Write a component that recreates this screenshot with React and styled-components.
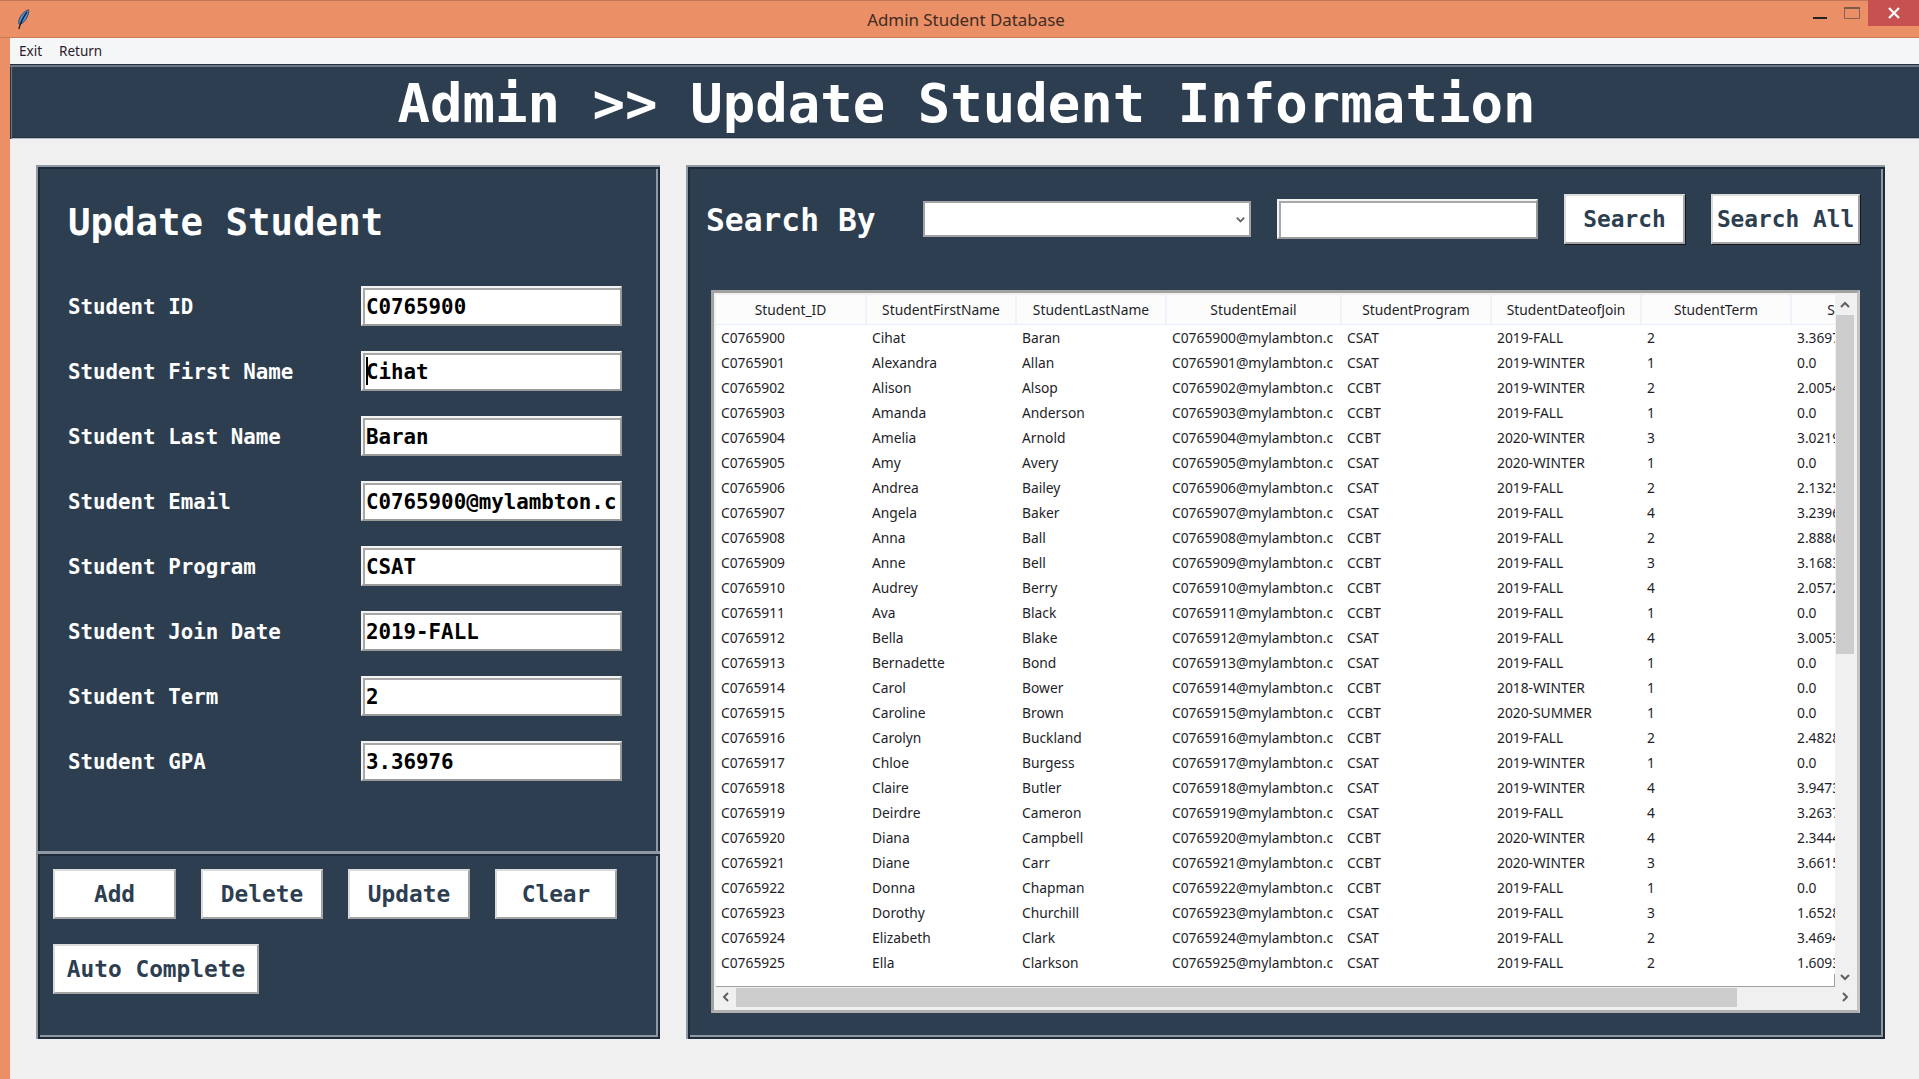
import styled, { createGlobalStyle } from "styled-components";

const NAVY = "#2c3e50";
const MONO = '"DejaVu Sans Mono", "Liberation Mono", monospace';
const UI = '"Noto Sans", "Open Sans", sans-serif';

const fields = [
  ["Student ID", "C0765900"],
  ["Student First Name", "Cihat"],
  ["Student Last Name", "Baran"],
  ["Student Email", "C0765900@mylambton.c"],
  ["Student Program", "CSAT"],
  ["Student Join Date", "2019-FALL"],
  ["Student Term", "2"],
  ["Student GPA", "3.36976"],
];

const columns = [
  "Student_ID",
  "StudentFirstName",
  "StudentLastName",
  "StudentEmail",
  "StudentProgram",
  "StudentDateofJoin",
  "StudentTerm",
  "StudentGPA",
];

const students = [
  ["Cihat", "Baran", "CSAT", "2019-FALL", 2, "3.36976"],
  ["Alexandra", "Allan", "CSAT", "2019-WINTER", 1, "0.0"],
  ["Alison", "Alsop", "CCBT", "2019-WINTER", 2, "2.00541"],
  ["Amanda", "Anderson", "CCBT", "2019-FALL", 1, "0.0"],
  ["Amelia", "Arnold", "CCBT", "2020-WINTER", 3, "3.02191"],
  ["Amy", "Avery", "CSAT", "2020-WINTER", 1, "0.0"],
  ["Andrea", "Bailey", "CSAT", "2019-FALL", 2, "2.13251"],
  ["Angela", "Baker", "CSAT", "2019-FALL", 4, "3.23961"],
  ["Anna", "Ball", "CCBT", "2019-FALL", 2, "2.88861"],
  ["Anne", "Bell", "CCBT", "2019-FALL", 3, "3.16831"],
  ["Audrey", "Berry", "CCBT", "2019-FALL", 4, "2.05721"],
  ["Ava", "Black", "CCBT", "2019-FALL", 1, "0.0"],
  ["Bella", "Blake", "CSAT", "2019-FALL", 4, "3.00531"],
  ["Bernadette", "Bond", "CSAT", "2019-FALL", 1, "0.0"],
  ["Carol", "Bower", "CCBT", "2018-WINTER", 1, "0.0"],
  ["Caroline", "Brown", "CCBT", "2020-SUMMER", 1, "0.0"],
  ["Carolyn", "Buckland", "CCBT", "2019-FALL", 2, "2.48281"],
  ["Chloe", "Burgess", "CSAT", "2019-WINTER", 1, "0.0"],
  ["Claire", "Butler", "CSAT", "2019-WINTER", 4, "3.94731"],
  ["Deirdre", "Cameron", "CSAT", "2019-FALL", 4, "3.26371"],
  ["Diana", "Campbell", "CCBT", "2020-WINTER", 4, "2.34441"],
  ["Diane", "Carr", "CCBT", "2020-WINTER", 3, "3.66151"],
  ["Donna", "Chapman", "CCBT", "2019-FALL", 1, "0.0"],
  ["Dorothy", "Churchill", "CSAT", "2019-FALL", 3, "1.65281"],
  ["Elizabeth", "Clark", "CSAT", "2019-FALL", 2, "3.46941"],
  ["Ella", "Clarkson", "CSAT", "2019-FALL", 2, "1.60931"],
];

const GlobalStyle = createGlobalStyle`
  html, body {
    margin: 0;
    padding: 0;
    background: #f0f0f0;
  }
  * {
    box-sizing: border-box;
  }
`;

const Window = styled.div`
  width: 1919px;
  height: 1079px;
  overflow: hidden;
  display: flex;
  flex-direction: column;
  background: #ea8f66;
  font-family: ${UI};
`;

const TitleBar = styled.div`
  height: 38px;
  flex: none;
  display: grid;
  grid-template-columns: 1fr auto 1fr;
  padding-left: 13px;
  border-top: 1px solid #c2775a;
  border-bottom: 1px solid #cc7a58;
`;

const TitleIcon = styled.svg`
  width: 14px;
  height: 21px;
  margin: 8px 0 0 3px;
`;

const TitleText = styled.div`
  font-size: 16.9px;
  line-height: 38px;
  color: #3f2c22;
`;

const WindowControls = styled.div`
  display: flex;
  justify-content: flex-end;
  align-items: flex-start;
  margin-top: -1px;
`;

const WinButton = styled.div`
  width: ${({ $wide }) => ($wide ? "51px" : "32px")};
  height: 26px;
  display: flex;
  align-items: center;
  justify-content: center;
  background: ${({ $wide }) => ($wide ? "#c75050" : "transparent")};
`;

const WinGlyph = styled.svg`
  width: 16px;
  height: 26px;
  display: block;
`;

const Body = styled.div`
  flex: 1;
  margin-left: 10px;
  display: flex;
  flex-direction: column;
  background: #f0f0f0;
`;

const MenuBar = styled.div`
  height: 26px;
  flex: none;
  display: flex;
  align-items: center;
  gap: 17px;
  padding-left: 9px;
  background: #f5f6f8;
  font-size: 13.5px;
  color: #2a1c2c;
`;

const Banner = styled.header`
  height: 75px;
  flex: none;
  display: flex;
  align-items: center;
  justify-content: center;
  padding: 3px 0 0 4px;
  background: ${NAVY};
  color: #fff;
  font-family: ${MONO};
  font-weight: 700;
  font-size: 54px;
  white-space: pre;
  box-shadow: inset 0 1px #222f3c, inset 0 3px #6d7884, inset 1px 0 #222f3c,
    inset 2px 0 #6d7884, inset 0 -1px #b8bec4, inset 0 -2px #222f3c;
`;

const Main = styled.main`
  flex: 1;
  display: flex;
  align-items: flex-start;
  gap: 26px;
  padding: 26px 0 0 26px;
`;

const Panel = styled.section`
  height: 874px;
  flex: none;
  background: ${NAVY};
  color: #fff;
  font-family: ${MONO};
  box-shadow: inset 2px 2px #8e99a4, inset -2px -2px #1f2b38,
    inset 4px 4px #1f2b38, inset -4px -4px #8e99a4;
`;

const UpdatePanel = styled(Panel)`
  width: 624px;
  display: flex;
  flex-direction: column;
`;

const SearchPanel = styled(Panel)`
  width: 1199px;
  padding: 29px 25px 0 20px;
`;

const FormSection = styled.div`
  height: 686px;
  flex: none;
  padding: 35px 32px 0 32px;
`;

const PanelTitle = styled.h2`
  margin: 0 0 42px;
  font-size: 37.4px;
  line-height: 44px;
  font-weight: 700;
`;

const FieldList = styled.div`
  display: flex;
  flex-direction: column;
  gap: 25px;
`;

const FieldRow = styled.div`
  display: flex;
  align-items: center;
  height: 40px;
`;

const FieldLabel = styled.label`
  width: 293px;
  flex: none;
  padding-top: 2px;
  font-size: 20.8px;
  font-weight: 700;
`;

const Entry = styled.div`
  position: relative;
  width: ${({ $width }) => $width}px;
  height: 40px;
  flex: none;
  padding: 0 3px;
  overflow: hidden;
  background: #fff;
  color: #000;
  font-size: 20.8px;
  font-weight: 700;
  line-height: 38px;
  white-space: nowrap;
  border: 2px solid;
  border-color: #f4f4f4 #9a9a9a #9a9a9a #f4f4f4;
  box-shadow: inset 2px 2px #a8a8a8;
`;

const Caret = styled.span`
  position: absolute;
  left: 3px;
  top: 4px;
  width: 2px;
  height: 28px;
  background: #000;
`;

const ButtonSection = styled.div`
  flex: 1;
  display: flex;
  flex-direction: column;
  gap: 25px;
  padding: 15px 0 0 15px;
  border-top: 3px solid #8e99a4;
  box-shadow: inset 0 2px #1f2b38;
  margin: 0 0 4px 2px;
`;

const ButtonRow = styled.div`
  display: flex;
  gap: 25px;
`;

const ActionButton = styled.button`
  width: ${({ $width }) => $width}px;
  height: 50px;
  flex: none;
  padding: 0;
  background: #fff;
  color: ${NAVY};
  font-family: ${MONO};
  font-size: 22.8px;
  font-weight: 700;
  border: 2px solid;
  border-color: #dcdcdc #a4a4a4 #a4a4a4 #dcdcdc;
  border-radius: 0;
  box-shadow: ${({ $shadow }) => ($shadow ? "1px 1px #11181f" : "none")};
`;

const SearchBar = styled.div`
  display: flex;
  align-items: center;
  gap: 26px;
  height: 50px;
`;

const SearchLabel = styled.div`
  width: 191px;
  flex: none;
  padding-top: 2px;
  font-size: 31.3px;
  font-weight: 700;
`;

const Combo = styled.div`
  width: 328px;
  height: 36px;
  flex: none;
  display: flex;
  align-items: center;
  justify-content: flex-end;
  padding-right: 3px;
  background: #fff;
  border: 2px solid #a3a3a3;
`;

const Tree = styled.div`
  width: 1149px;
  height: 723px;
  margin: 46px 0 0 5px;
  padding: 2px;
  display: grid;
  grid-template-columns: 1119px 20px;
  grid-template-rows: 692px 20px;
  background: #f0f0f0;
  color: #1e1e28;
  font-family: ${UI};
  font-size: 13.8px;
  border: 3px solid;
  border-color: #a2a2a2 #c4c4c4 #b0b0b0 #a2a2a2;
`;

const Viewport = styled.div`
  position: relative;
  overflow: hidden;
  background: #fff;
  border-bottom: 1px solid #a0a0a0;

  &::after {
    content: "";
    position: absolute;
    right: 0;
    bottom: 0;
    width: 1px;
    height: 12px;
    background: #a0a0a0;
  }
`;

const TreeRow = styled.div`
  display: grid;
  grid-template-columns: 151px 150px 150px 175px 150px 150px 150px 150px;
  width: 1226px;
  height: ${({ $head }) => ($head ? "30px" : "25px")};
  align-items: center;
  ${({ $head }) => ($head ? "border-bottom: 1px solid #e8f0fa;" : "")}
`;

const HeadCell = styled.div`
  height: 100%;
  line-height: 29px;
  text-align: center;
  white-space: nowrap;
  overflow: hidden;
  background: #fcfcfc;
  border-right: 2px solid #eef3fa;
`;

const Cell = styled.div`
  padding-left: 5px;
  white-space: nowrap;
  overflow: hidden;
`;

const VScroll = styled.div`
  display: flex;
  flex-direction: column;
  background: #f0f0f0;
`;

const HScroll = styled.div`
  grid-column: 1 / 3;
  display: flex;
  background: #f0f0f0;
`;

const ArrowBox = styled.div`
  width: ${({ $w }) => $w}px;
  height: ${({ $h }) => $h}px;
  flex: none;
  display: flex;
  align-items: center;
  justify-content: center;
`;

const VThumb = styled.div`
  width: 18px;
  height: 339px;
  margin-left: 1px;
  flex: none;
  background: #cdcdcd;
`;

const HThumb = styled.div`
  width: 1001px;
  height: 19px;
  margin-top: 1px;
  flex: none;
  background: #cdcdcd;
`;

const Spacer = styled.div`
  flex: 1;
`;

function Chevron({ dir, color = "#5f5f5f", size = 12 }) {
  const paths = {
    up: "M2 8 L6 4 L10 8",
    down: "M2 4 L6 8 L10 4",
    left: "M8 2 L4 6 L8 10",
    right: "M4 2 L8 6 L4 10",
  };
  return (
    <svg width={size} height={size} viewBox="0 0 12 12">
      <path d={paths[dir]} fill="none" stroke={color} strokeWidth="2" />
    </svg>
  );
}

function Feather() {
  return (
    <TitleIcon viewBox="0 0 14 21">
      <path
        d="M12.6 0.8 C8.4 2 4.4 6.2 3 11 C2.4 13.2 2.6 14.6 3.4 15.4 C6.8 14.6 9.6 11.6 11.2 8 C12.4 5.4 13 3 12.6 0.8 Z"
        fill="#4f8fd8"
        stroke="#24364e"
        strokeWidth="0.8"
      />
      <path d="M11 3 C8 7 5 12 2.8 20" fill="none" stroke="#14202e" strokeWidth="1.3" />
    </TitleIcon>
  );
}

export default function App() {
  return (
    <>
      <GlobalStyle />
      <Window>
        <TitleBar>
          <div>
            <Feather />
          </div>
          <TitleText>Admin Student Database</TitleText>
          <WindowControls>
            <WinButton>
              <WinGlyph viewBox="0 0 16 26">
                <rect x="1" y="17" width="14" height="2" fill="#222" />
              </WinGlyph>
            </WinButton>
            <WinButton>
              <WinGlyph viewBox="0 0 16 26">
                <rect x="0.5" y="7.5" width="15" height="11" fill="none" stroke="#8a6350" />
                <rect x="0" y="7" width="16" height="2" fill="#7b5a4a" />
              </WinGlyph>
            </WinButton>
            <WinButton $wide>
              <WinGlyph viewBox="0 0 16 26">
                <path d="M3 8 L13 18 M13 8 L3 18" stroke="#fff" strokeWidth="2.2" />
              </WinGlyph>
            </WinButton>
          </WindowControls>
        </TitleBar>
        <Body>
          <MenuBar>
            <span>Exit</span>
            <span>Return</span>
          </MenuBar>
          <Banner>{"Admin >> Update Student Information"}</Banner>
          <Main>
            <UpdatePanel>
              <FormSection>
                <PanelTitle>Update Student</PanelTitle>
                <FieldList>
                  {fields.map(([label, value], i) => (
                    <FieldRow key={label}>
                      <FieldLabel>{label}</FieldLabel>
                      <Entry $width={261}>
                        {i === 1 && <Caret />}
                        {value}
                      </Entry>
                    </FieldRow>
                  ))}
                </FieldList>
              </FormSection>
              <ButtonSection>
                <ButtonRow>
                  <ActionButton $width={123}>Add</ActionButton>
                  <ActionButton $width={122}>Delete</ActionButton>
                  <ActionButton $width={122}>Update</ActionButton>
                  <ActionButton $width={122}>Clear</ActionButton>
                </ButtonRow>
                <ButtonRow>
                  <ActionButton $width={206}>Auto Complete</ActionButton>
                </ButtonRow>
              </ButtonSection>
            </UpdatePanel>
            <SearchPanel>
              <SearchBar>
                <SearchLabel>Search By</SearchLabel>
                <Combo>
                  <Chevron dir="down" size={11} color="#666" />
                </Combo>
                <Entry $width={261} />
                <ActionButton $width={121} $shadow>
                  Search
                </ActionButton>
                <ActionButton $width={149} $shadow>
                  Search All
                </ActionButton>
              </SearchBar>
              <Tree>
                <Viewport>
                  <TreeRow $head>
                    {columns.map((c) => (
                      <HeadCell key={c}>{c}</HeadCell>
                    ))}
                  </TreeRow>
                  {students.map((s, i) => {
                    const id = "C" + (765900 + i).toString().padStart(7, "0");
                    return (
                      <TreeRow key={id}>
                        <Cell>{id}</Cell>
                        <Cell>{s[0]}</Cell>
                        <Cell>{s[1]}</Cell>
                        <Cell>{id}@mylambton.c</Cell>
                        <Cell>{s[2]}</Cell>
                        <Cell>{s[3]}</Cell>
                        <Cell>{s[4]}</Cell>
                        <Cell>{s[5]}</Cell>
                      </TreeRow>
                    );
                  })}
                </Viewport>
                <VScroll>
                  <ArrowBox $w={20} $h={20}>
                    <Chevron dir="up" />
                  </ArrowBox>
                  <VThumb />
                  <Spacer />
                  <ArrowBox $w={20} $h={21}>
                    <Chevron dir="down" />
                  </ArrowBox>
                </VScroll>
                <HScroll>
                  <ArrowBox $w={20} $h={20}>
                    <Chevron dir="left" />
                  </ArrowBox>
                  <HThumb />
                  <Spacer />
                  <ArrowBox $w={20} $h={20}>
                    <Chevron dir="right" />
                  </ArrowBox>
                </HScroll>
              </Tree>
            </SearchPanel>
          </Main>
        </Body>
      </Window>
    </>
  );
}
